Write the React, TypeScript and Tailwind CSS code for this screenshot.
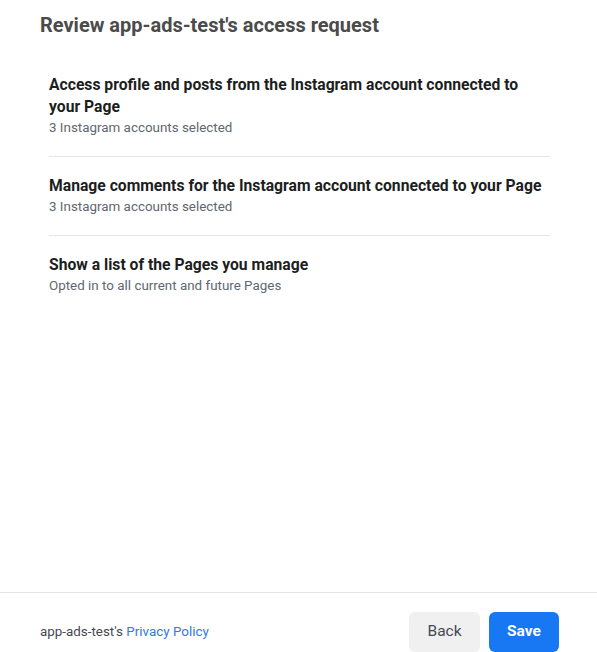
const permissions = [
  {
    title: "Access profile and posts from the Instagram account connected to your Page",
    detail: "3 Instagram accounts selected",
  },
  {
    title: "Manage comments for the Instagram account connected to your Page",
    detail: "3 Instagram accounts selected",
  },
  {
    title: "Show a list of the Pages you manage",
    detail: "Opted in to all current and future Pages",
  },
];

export default function App() {
  return (
    <div className="h-screen flex flex-col bg-white font-['Roboto',sans-serif]">
      {/* HEADER */}
      <h1 className="pl-[40px] pt-[13px] text-[20px] leading-[24px] font-bold text-[#4b4b4b]">
        Review app-ads-test's access request
      </h1>

      {/* PERMISSIONS */}
      <div className="ml-[49px] w-[501px] mt-[19px]">
        {permissions.map((p, i) => (
          <div
            key={i}
            className={`py-[18px] ${i > 0 ? "border-t border-[#e5e5e5]" : ""}`}
          >
            <p className="text-[15.7px] leading-[22px] font-bold text-[#1c1e21]">
              {p.title}
            </p>
            <p className="text-[13.4px] leading-[20px] text-[#606770]">{p.detail}</p>
          </div>
        ))}
      </div>

      <div className="flex-1" />

      {/* FOOTER */}
      <div className="border-t border-[#e5e5e5] pt-[19px] pl-[40px] pr-[38px] flex items-center justify-between">
        <p className="text-[13.4px] text-[#444950]">
          app-ads-test's <span className="text-[#3578e5]">Privacy Policy</span>
        </p>
        <div className="flex gap-[9px]">
          <button className="w-[71px] h-[40px] rounded-[6px] bg-[#f0f0f0] text-[15.5px] text-[#444950]">
            Back
          </button>
          <button className="w-[70px] h-[40px] rounded-[6px] bg-[#1877f2] text-[15.5px] font-bold text-white">
            Save
          </button>
        </div>
      </div>
    </div>
  );
}
